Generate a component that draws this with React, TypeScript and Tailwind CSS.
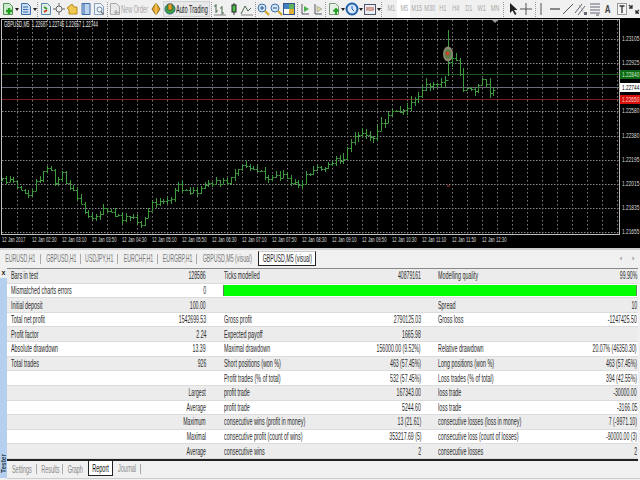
import React from "react";

const F = "font-['Liberation_Sans',Arial,sans-serif]";

function L({ children, s = "scale-x-[0.49]" }: { children?: React.ReactNode; s?: string }) {
  return (
    <span className="flex w-0 shrink-0 justify-start">
      <span className={`inline-block shrink-0 whitespace-nowrap origin-left ${s}`}>{children}</span>
    </span>
  );
}
function R({ children, s = "scale-x-[0.47]" }: { children?: React.ReactNode; s?: string }) {
  return (
    <span className="flex w-0 shrink-0 justify-end">
      <span className={`inline-block shrink-0 whitespace-nowrap origin-right ${s}`}>{children}</span>
    </span>
  );
}

const rows: string[][] = [
  ["Bars in test", "128586", "Ticks modelled", "40879161", "Modelling quality", "99.90%"],
  ["Mismatched charts errors", "0"],
  ["Initial deposit", "100.00", "", "", "Spread", "10"],
  ["Total net profit", "1542699.53", "Gross profit", "2790125.03", "Gross loss", "-1247425.50"],
  ["Profit factor", "2.24", "Expected payoff", "1665.98", "", ""],
  ["Absolute drawdown", "13.39", "Maximal drawdown", "156000.00 (9.52%)", "Relative drawdown", "20.07% (46350.30)"],
  ["Total trades", "926", "Short positions (won %)", "463 (57.45%)", "Long positions (won %)", "463 (57.45%)"],
  ["", "", "Profit trades (% of total)", "532 (57.45%)", "Loss trades (% of total)", "394 (42.55%)"],
  ["", "Largest", "profit trade", "167343.00", "loss trade", "-30000.00"],
  ["", "Average", "profit trade", "5244.60", "loss trade", "-3166.05"],
  ["", "Maximum", "consecutive wins (profit in money)", "13 (21.61)", "consecutive losses (loss in money)", "7 (-9971.10)"],
  ["", "Maximal", "consecutive profit (count of wins)", "353217.69 (5)", "consecutive loss (count of losses)", "-90000.00 (3)"],
  ["", "Average", "consecutive wins", "2", "consecutive losses", "2"],
];

const keyPts: [number, number][] = [
  [2, 181], [15, 181], [18, 190], [22, 194], [32, 192], [35, 184], [40, 180], [45, 167], [50, 170], [55, 183], [62, 170], [66, 185],
  [72, 190], [78, 198], [82, 210], [88, 216], [92, 218], [100, 211], [105, 208], [112, 216], [120, 218], [128, 214], [135, 218],
  [142, 224], [147, 216], [153, 202], [170, 198], [177, 183], [187, 194], [200, 190], [210, 182], [227, 183], [233, 172], [243, 164],
  [257, 172], [267, 176], [283, 177], [300, 185], [307, 175], [317, 169], [320, 168], [330, 165], [335, 155], [343, 160], [350, 142],
  [358, 132], [373, 137], [383, 123], [392, 113], [400, 114], [408, 105], [420, 93], [427, 85], [440, 82], [446, 78], [449, 60], [453, 55],
  [458, 68], [463, 92], [470, 90], [477, 88], [483, 80], [490, 92], [493, 90],
];
function yAt(x: number) {
  for (let i = 0; i < keyPts.length - 1; i++) {
    const [a, b] = keyPts[i];
    const [c, d] = keyPts[i + 1];
    if (x >= a && x <= c) return b + ((d - b) * (x - a)) / (c - a);
  }
  return 90;
}
function barsPath() {
  let d = "";
  let prev = 181;
  for (let x = 2; x <= 494; x += 3.75) {
    const px = Math.round(x) + 0.5;
    const k = Math.sin(x * 12.9898) * 43758.5453;
    const r = k - Math.floor(k);
    const k2 = Math.sin(x * 78.233) * 12543.123;
    const r2 = k2 - Math.floor(k2);
    const c = Math.round(yAt(x) + (r - 0.5) * 6);
    const active = x > 340 ? 1.6 : x < 320 && x > 30 ? 1 : 0.8;
    let hi = Math.min(prev, c) - Math.round(r2 * 4 * active);
    let lo = Math.max(prev, c) + Math.round(r * 4 * active);
    if (Math.abs(x - 448) < 2) { hi = 30; lo = 76; }
    d += `M${px} ${hi}V${lo}M${px - 1.5} ${prev + 0.5}H${px}M${px} ${c + 0.5}H${px + 2}`;
    prev = c;
  }
  return d;
}

const xGrid = Array.from({ length: 41 }, (_, i) => 17.5 + i * 15);
const yGrid = [39, 63, 87, 111, 136, 160, 184, 208, 232];
const prices: [string, number][] = [
  ["1.23105", 39], ["1.22925", 63], ["1.22580", 111], ["1.22380", 136], ["1.22195", 160], ["1.22015", 184], ["1.21835", 208], ["1.21655", 232],
];
const times = ["2017", "02:30", "03:10", "03:50", "04:30", "05:10", "05:50", "06:30", "07:10", "07:50", "08:30", "09:10", "09:50", "10:30", "11:10", "11:50", "12:30"];

function Chart() {
  return (
    <div className="relative h-[230px] bg-black">
      <svg width={640} height={230} viewBox="0 18 640 230" className="absolute left-0 top-0">
        {yGrid.map((y) => (
          <line key={y} x1={2} x2={619} y1={y + 0.5} y2={y + 0.5} stroke="#8c8c8c" strokeDasharray="1.5 1.5" />
        ))}
        {xGrid.map((x) => (
          <line key={x} x1={x} x2={x} y1={20} y2={234} stroke="#808080" strokeDasharray="1.5 2.5" />
        ))}
        <rect x={1.5} y={19.5} width={618} height={215} fill="none" stroke="#c0c0c0" />
        <line x1={2} x2={619} y1={74.5} y2={74.5} stroke="#1a5a1a" />
        <line x1={2} x2={619} y1={87.5} y2={87.5} stroke="#6a6a7c" />
        <line x1={2} x2={619} y1={99.5} y2={99.5} stroke="#7d1c1c" />
        <path d={barsPath()} stroke="#3e9a3e" strokeWidth={1} fill="none" />
        <ellipse cx={448} cy={54} rx={5} ry={7.5} fill="#8a8a72" />
        <ellipse cx={448} cy={54} rx={3.4} ry={5} fill="#5f7a4a" />
        <circle cx={447.5} cy={53.5} r={1.7} fill="#e03a20" />
        <rect x={447} y={185} width={3} height={2} fill="#5a1515" />
        <path d="M492 20h6l-3 3z" fill="#999" />
      </svg>
      <div className="absolute left-[4px] top-[2px] h-[10px] flex items-center text-[9px] text-[#e8e8e8]">
        <L s="scale-x-[0.48]">GBPUSD,M5&nbsp; 1.22687 1.22745 1.22657 1.22744</L>
      </div>
      {prices.map(([p, y]) => (
        <div key={p} className="absolute left-[622px] h-[10px] flex items-center text-[8px] text-[#ddd]" style={{ top: y - 23 }}>
          <L s="scale-x-[0.6]">{p}</L>
        </div>
      ))}
      <div className="absolute left-[620px] top-[52px] w-[20px] h-[9px] bg-[#0c6b12] text-[#cfe8cf] text-[8px] flex items-center pl-[2px]"><L s="scale-x-[0.6]">1.22840</L></div>
      <div className="absolute left-[620px] top-[65px] w-[20px] h-[9px] bg-white text-black text-[8px] flex items-center pl-[2px]"><L s="scale-x-[0.6]">1.22744</L></div>
      <div className="absolute left-[620px] top-[77px] w-[20px] h-[9px] bg-[#d8100c] text-[#f5d0d0] text-[8px] flex items-center pl-[2px]"><L s="scale-x-[0.6]">1.22650</L></div>
      <div className="absolute left-[2px] top-[217px] flex text-[8px] text-[#ddd] h-[10px] items-center">
        {times.map((t) => (
          <div key={t} className="w-[30px] flex"><L s="scale-x-[0.53]">12 Jan {t}</L></div>
        ))}
      </div>
    </div>
  );
}

const Caret = () => (
  <div className="w-[4px] h-full flex items-center justify-center">
    <svg width={4} height={3}><path d="M0 0h4L2 3z" fill="#222" /></svg>
  </div>
);
const Sep = ({ w = 3 }: { w?: number }) => (
  <div className="h-full flex items-center justify-center" style={{ width: w }}>
    <div className="h-[15px] border-l border-dotted border-[#999]" />
  </div>
);
function Ic({ w = 13, children }: { w?: number; children: React.ReactNode }) {
  return (
    <div className="h-full flex items-center justify-center shrink-0" style={{ width: w }}>
      <svg width={14} height={14} viewBox="0 0 14 14" fill="none" className="shrink-0">{children}</svg>
    </div>
  );
}
const Doc = ({ fill = "#e8eef8", stroke = "#6a7f9c" }) => <path d="M2.5 1.5h6l3 3v8h-9z" fill={fill} stroke={stroke} />;

function Toolbar() {
  return (
    <div className={`h-[18px] flex items-center bg-[#f0f0f0] overflow-hidden pl-[1px] ${F}`}>
      <Ic w={14}><Doc fill="#cfe8cf" stroke="#4f8f4f" /><path d="M8 6v6M5 9h6" stroke="#1fa01f" strokeWidth={2.4} /></Ic>
      <Caret />
      <Ic w={14}><Doc fill="#c9dcf2" stroke="#3f6fa8" /><path d="M4 5h5M4 7.5h5M4 10h5" stroke="#3f6fa8" /></Ic>
      <Caret />
      <Sep w={2} />
      <Ic w={14}><Doc fill="#dfeee0" stroke="#5a8ab0" /><path d="M5 5l3 2" stroke="#2a9a2a" strokeWidth={1.6} /><path d="M5 10l3-2" stroke="#d03020" strokeWidth={1.6} /></Ic>
      <Ic><circle cx={7} cy={7} r={3} stroke="#666" /><path d="M7 1v3M7 10v3M1 7h3M10 7h3" stroke="#666" /></Ic>
      <Ic><path d="M2 6l5-4 2 3h3v7H4V8z" fill="#f0c850" stroke="#b48a20" /></Ic>
      <Ic w={14}><path d="M3 1.5h8v11H3z" fill="#bcd4f0" stroke="#3f6fa8" /><path d="M5 1.5v11" stroke="#3f6fa8" /></Ic>
      <Ic><Doc fill="#eef3f8" stroke="#8aa0b8" /><circle cx={7.5} cy={7.5} r={2.5} stroke="#6a8aa8" /><path d="M9 9.5l2.5 3" stroke="#777" strokeWidth={1.4} /></Ic>
      <Sep />
      <div className="w-[41px] h-full flex items-center shrink-0">
        <Ic w={12}><Doc fill="#e8e8e8" stroke="#aaa" /><path d="M8 8v5M6 10.500h5" stroke="#b0b0b0" strokeWidth={1.6} /></Ic>
        <span className="text-[10px] text-[#a8a8a8] inline-block whitespace-nowrap scale-x-[0.56] origin-left">New Order</span>
      </div>
      <Ic w={12}><path d="M7 1l4 6-4 6-4-6z" fill="#e8a020" stroke="#8a6a20" /><path d="M7 1v12" stroke="#f7e08a" /></Ic>
      <div className="ml-[1px] w-[47px] h-[16px] flex items-center bg-[#e8e8e8] border border-[#d4d4d4] shrink-0">
        <Ic w={12}><circle cx={7} cy={7} r={5} fill="#3fa040" stroke="#2a6a80" /><rect x={5} y={2} width={4} height={6} fill="#e8a020" stroke="#444" strokeWidth={0.6} /></Ic>
        <span className="text-[10px] text-[#222] inline-block whitespace-nowrap scale-x-[0.56] origin-left">Auto Trading</span>
      </div>
      <Sep w={4} />
      <Ic><path d="M3 2v9M3 4H1M3 9h2M9 4v9M9 6H7M9 11h2" stroke="#4a6a4a" /><path d="M1 13h12" stroke="#888" /></Ic>
      <Ic w={14}><path d="M7 1v12" stroke="#333" /><rect x={5} y={3} width={4} height={7} fill="#4bc04b" stroke="#222" /></Ic>
      <Ic><path d="M1 12l4-8 3 5 3-3" stroke="#4a6a4a" /><path d="M1 13h12" stroke="#888" /></Ic>
      <Sep />
      <Ic><circle cx={6} cy={6} r={4} fill="#cfe3f7" stroke="#3f6fa8" /><path d="M4 6h4M6 4v4" stroke="#2a5a90" /><path d="M9 9l4 4" stroke="#d0a020" strokeWidth={2} /></Ic>
      <Ic w={12}><circle cx={6} cy={6} r={4} fill="#cfe3f7" stroke="#3f6fa8" /><path d="M4 6h4" stroke="#2a5a90" /><path d="M9 9l4 4" stroke="#d0a020" strokeWidth={2} /></Ic>
      <Ic w={14}><rect x={1.500} y={1.500} width={11} height={11} fill="#fff" stroke="#33558a" /><rect x={2} y={2} width={5} height={5} fill="#3f7fc0" /><rect x={7} y={7} width={5} height={5} fill="#e0b030" /><rect x={7} y={2} width={5} height={5} fill="#60b060" /></Ic>
      <Sep />
      <Ic><path d="M4 2v10M4 12h7" stroke="#556" /><path d="M6 4l5 3-5 3z" fill="#4bb04b" /></Ic>
      <Ic><path d="M4 2v10M4 12h7" stroke="#556" /><path d="M6 4l5 3-5 3z" fill="#d8d8a0" stroke="#888" strokeWidth={0.5} /></Ic>
      <Sep w={1} />
      <div className="w-[1px]" />
      <Ic w={14}><Doc fill="#e6f0e6" stroke="#7a9a7a" /><path d="M9 7v6M6.500 9.500L9 7l2.500 2.500" stroke="#1fa01f" strokeWidth={1.8} /></Ic>
      <Caret />
      <Ic w={14}><circle cx={7} cy={7} r={5.5} fill="#d8e8fa" stroke="#1f5fa8" strokeWidth={2} /><path d="M7 4v3l2 2" stroke="#1f5fa8" /></Ic>
      <Caret />
      <Ic w={14}><rect x={1.500} y={2.500} width={11} height={10} fill="#e8eef8" stroke="#556" /><path d="M3 6h8M3 8.500c2-2 3 1 8-1" stroke="#c05030" /></Ic>
      <Caret />
      <Sep />
      <div className="w-[1px]" />
      {["M1", "M5", "M15", "M30", "H1", "H4", "D1", "W1", "MN"].map((t) => (
        <div key={t} className={`w-[13px] h-full shrink-0 flex items-center justify-center text-[9px] text-[#aaa] ${t === "M5" ? "bg-white" : ""}`}>
          <span className="inline-block whitespace-nowrap scale-x-[0.62]">{t}</span>
        </div>
      ))}
      <Sep w={5} />
      <Ic><path d="M4 1v10l2.500-2.500L9 13l1.500-1L8 8h3.500z" fill="#222" /></Ic>
      <Ic w={14}><path d="M7 1v12M1 7h12" stroke="#555" /></Ic>
      <Sep w={4} />
      <Ic w={8}><path d="M7 1v12" stroke="#555" /></Ic>
      <div className="w-[3px]" />
      <Ic w={14}><path d="M2 7h10" stroke="#444" strokeWidth={1.200} /></Ic>
      <Ic w={12}><path d="M2 12L12 2" stroke="#555" /></Ic>
      <Ic w={14}><path d="M1 11L8 2M4 13l7-9" stroke="#667" /><path d="M5 3l6 9" stroke="#999" strokeDasharray="1 1" /><path d="M10 10h3v3h-3z" fill="#667" /></Ic>
      <Ic><path d="M2 2h10M2 5h10M2 8h10M2 11h10" stroke="#667" /><path d="M8 13h3" stroke="#555" /></Ic>
      <div className="w-[14px] h-full flex items-center justify-center text-[10px] font-bold text-[#444] shrink-0"><span className="inline-block scale-x-[0.8]">A</span></div>
      <Ic><rect x={2.500} y={1.500} width={9} height={11} fill="#f5f5f5" stroke="#999" /><path d="M4.500 4h5M7 4v7" stroke="#333" strokeWidth={1.300} /></Ic>
      <Ic w={12}><path d="M2 3l3 3M5 3v3H2M9 11l3-3M9 8v3h3" stroke="#333" strokeWidth={1.300} /></Ic>
    </div>
  );
}

const tabs: [string, number][] = [["EURUSD,H1", 41], ["GBPUSD,H1", 40], ["USDJPY,H1", 37], ["EURCHF,H1", 40], ["EURGBP,H1", 39], ["GBPUSD,M5 (visual)", 61]];

function ChartTabs() {
  return (
    <div className={`h-[20px] flex bg-[#f0f0f0] border-t-2 border-[#cfcfcf] pt-[1px] pb-[2px] text-[10.5px] ${F}`}>
      {tabs.map(([t, w]) => (
        <div key={t} className="shrink-0 flex items-center justify-center text-[#777] relative" style={{ width: w }}>
          <span className="inline-block shrink-0 whitespace-nowrap scale-x-[0.5]">{t}</span>
          {!t.includes("M5") && <span className="absolute right-0 top-[3px] h-[10px] border-r border-[#aaa]" />}
        </div>
      ))}
      <div className="w-[58px] shrink-0 flex items-center justify-center bg-white border border-[#222] border-t-[#ccc] text-[#222]">
        <span className="inline-block shrink-0 whitespace-nowrap scale-x-[0.5]">GBPUSD,M5 (visual)</span>
      </div>
      <div className="ml-auto w-[25px] flex items-center justify-around pr-[1px] text-[8px] text-[#666]">
        <span>‹</span><span>›</span>
      </div>
    </div>
  );
}

function Report() {
  return (
    <div className="h-[193px] grid grid-cols-1 grid-rows-[repeat(13,minmax(0,1fr))] border-t border-[#888] border-b-2 border-b-[#222] text-[11px] leading-none text-[#2a2a2a] w-[631px]">
      {rows.map((r, i) => (
        <div key={i} className={`flex items-center min-h-0 border-b border-[#dcdcdc] ${i % 2 === 0 ? "bg-[#ececec]" : "bg-white"}`}>
          <div className="w-[208px] shrink-0 flex justify-between pl-[4px] pr-[9px]"><L>{r[0]}</L><R>{r[1]}</R></div>
          {r.length === 2 ? (
            <div className="ml-[8px] flex-1 mr-[1px] h-[11px] bg-[#00ff00] border-x border-[#5a8a5a]" />
          ) : (
            <>
              <div className="w-[216px] shrink-0 flex justify-between pl-[9px] pr-[10px]"><L>{r[2]}</L><R>{r[3]}</R></div>
              <div className="w-[207px] shrink-0 flex justify-between pl-[7px] pr-[1px]"><L>{r[4]}</L><R>{r[5]}</R></div>
            </>
          )}
        </div>
      ))}
    </div>
  );
}

const bottomTabs: [string, number][] = [["Settings", 30], ["Results", 26], ["Graph", 25]];

function BottomTabs() {
  return (
    <div className="h-[18px] flex bg-[#f0f0f0] text-[11px] border-b border-[#cccccc] w-[633px]">
      {bottomTabs.map(([t, w]) => (
        <div key={t} className="shrink-0 flex items-center justify-center text-[#888] relative" style={{ width: w }}>
          <span className="inline-block shrink-0 whitespace-nowrap scale-x-[0.5]">{t}</span>
          {t !== "Graph" && <span className="absolute right-0 top-[3px] h-[10px] border-r border-[#aaa]" />}
        </div>
      ))}
      <div className="w-[25px] shrink-0 h-[15px] flex items-center justify-center bg-white border-x border-b border-[#222] text-[#111]">
        <span className="inline-block shrink-0 whitespace-nowrap scale-x-[0.5]">Report</span>
      </div>
      <div className="w-[28px] shrink-0 h-[15px] flex items-center justify-center text-[#888] relative">
        <span className="inline-block shrink-0 whitespace-nowrap scale-x-[0.5]">Journal</span>
        <span className="absolute right-0 top-[3px] h-[10px] border-r border-[#aaa]" />
      </div>
    </div>
  );
}

export default function App() {
  return (
    <div className={`w-[640px] h-[480px] overflow-hidden flex flex-col bg-[#f0f0f0] ${F}`}>
      <Toolbar />
      <Chart />
      <ChartTabs />
      <div className="flex h-[212px]">
        <div className="w-[7px] shrink-0 flex flex-col items-center mt-[1px] mb-[2px]">
          <div className="h-[9px] w-full flex items-center justify-center text-[7px] font-bold text-[#222] bg-[#eee]">x</div>
          <div className="flex-1 w-full bg-[#b5d0ee] flex flex-col justify-end items-center pb-[5px] overflow-hidden">
            <span className="[writing-mode:vertical-rl] rotate-180 text-[6.500px] font-bold text-[#2c3e50] leading-[7px]">Tester</span>
          </div>
        </div>
        <div className="flex-1 flex flex-col min-w-0">
          <Report />
          <BottomTabs />
        </div>
      </div>
    </div>
  );
}
